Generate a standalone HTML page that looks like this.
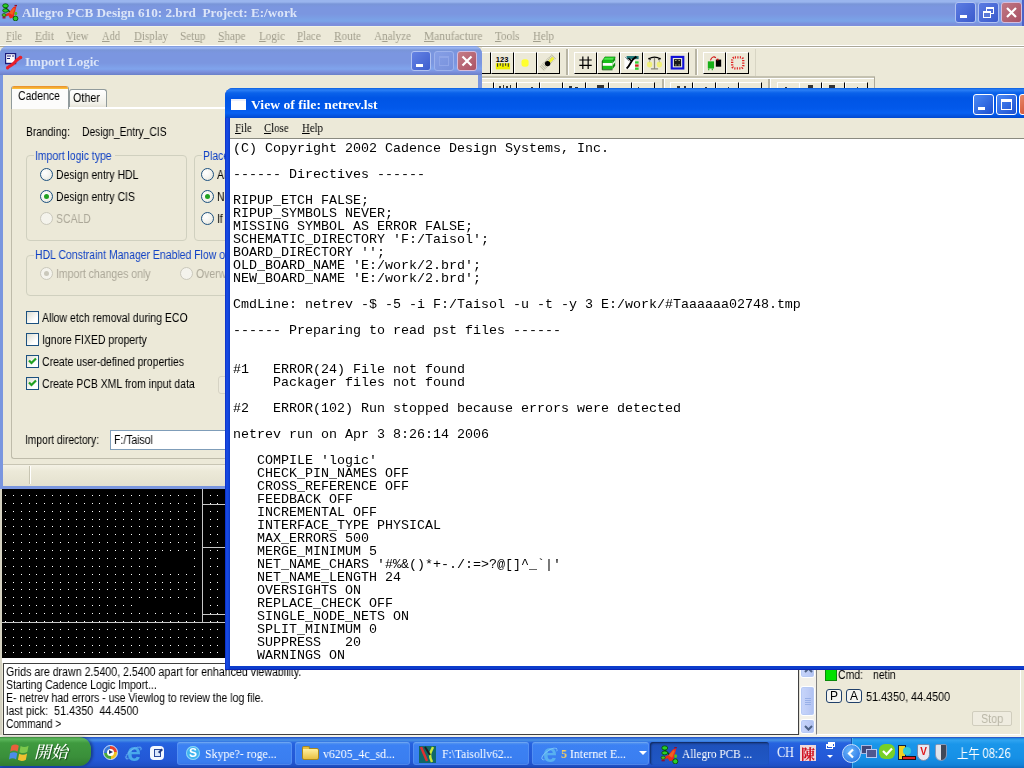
<!DOCTYPE html>
<html lang="zh-Hant">
<head>
<meta charset="utf-8">
<title>Allegro PCB Design 610: 2.brd</title>
<style>
*{box-sizing:border-box;margin:0;padding:0}
html,body{width:1024px;height:768px;overflow:hidden;background:#ece9d8}
body{position:relative;font-family:"Liberation Sans","Noto Sans CJK TC",sans-serif;font-size:12px;color:#000}
.abs{position:absolute}
.serif{font-family:"Liberation Serif","Noto Serif CJK SC",serif}
u{text-decoration:underline}
.lbl,.cap,#con div,#mmenu span,#vw .menu span,.tbtn span,.kb,#task>div{will-change:transform}

/* ---------- main window ---------- */
#mtitle{left:0;top:0;width:1024px;height:26px;background:linear-gradient(#9ab5ee 0,#9ab5ee 2px,#7995d8 4px,#7b96e0 7px,#7b96e0 14px,#7aa4e8 21px,#7b8fdc 24px,#7b8fdc 26px)}
#mtitle .cap{left:22px;top:5px;transform:scaleX(1.015);transform-origin:0 0;font:bold 13px/16px "Liberation Serif",serif;color:#dbe5f8;white-space:pre}
#mmenu{left:0;top:26px;width:1024px;height:21px;background:#ece9d8;border-top:1px solid #f0f4e6;border-bottom:1px solid #aaa798;box-shadow:inset 0 -1px 0 #fff}
#mmenu span{position:absolute;top:2px;font:12px/15px "Liberation Serif",serif;color:#a29f8e;white-space:nowrap;transform-origin:0 0}
.wbtn{position:absolute;width:21px;height:21px;border-radius:3px;border:1px solid #dfe6f8}

/* ---------- toolbar ---------- */
.tb{position:absolute;top:52px;width:23px;height:22px;background:#ece9d8;border:1px solid;border-color:#fff #000 #000 #fff}

.tb2{position:absolute;top:82px;width:23px;height:10px;border:1px solid;border-color:#fff #000 transparent #fff}
/* ---------- import logic ---------- */
#imp{left:0;top:46px;width:482px;height:443px;background:#7a96df;border-radius:8px 8px 0 0}
#imp .ttl{left:0;top:0;width:482px;height:29px;border-radius:8px 8px 0 0;background:linear-gradient(#6c88d0 0,#9ab4f0 1px,#9ab4f0 2px,#7995d8 4px,#7b96e0 7px,#7b96e0 17px,#80a4ec 23px,#7b8fdc 26px,#6a80c8 29px)}
#imp .cap{left:25px;top:8px;font:bold 13px/16px "Liberation Serif",serif;color:#dbe5f8;white-space:pre}
#imp .body{left:3px;top:29px;width:475px;height:411px;background:#ece9d8}
.lbl{position:absolute;white-space:nowrap;font:12px/14px "Liberation Sans",sans-serif}
#imp .lbl{margin-left:-.6px}
.blue{color:#0f40c4}
.gray{color:#aca899}
.grp{position:absolute;border:1px solid #d0d0bf;border-radius:4px}
.radio{position:absolute;width:13px;height:13px;border-radius:50%;border:1px solid #1c5180;background:radial-gradient(circle at 35% 35%,#fff 0,#f3f3ee 50%,#dcdcd0 100%)}
.radio.on::after{content:"";position:absolute;left:3px;top:3px;width:5px;height:5px;border-radius:50%;background:#21a121}
.radio.dis{border-color:#cac8bb;background:#f4f3ec}
.radio.dis.on::after{background:#cac8bb}
.chk{position:absolute;width:13px;height:13px;border:1px solid #1c5180;background:linear-gradient(135deg,#dcdcd0,#fff 70%)}

/* ---------- view window ---------- */
#vw{left:225px;top:88px;width:810px;height:582px;box-shadow:inset 0 -1px 0 #0a24b6;background:linear-gradient(90deg,#0a2cc0 0,#1648e0 1.5px,#1648e0 3px,#0c3ccc 4.5px,#0c3ccc 100%);border-radius:8px 8px 0 0}
#vw .ttl{left:0;top:0;width:810px;height:30px;border-radius:8px 8px 0 0;background:linear-gradient(#0a5fe0 0,#2b7ff5 2px,#0a62ea 5px,#0055e5 10px,#0258ea 20px,#0660f2 25px,#0148cf 30px)}
#vw .cap{left:26px;top:9px;transform:scaleX(1.049);transform-origin:0 0;font:bold 13px/16px "Liberation Serif",serif;color:#fff;white-space:pre}
#vw .menu{left:4.5px;top:30px;width:806px;height:21px;background:#ece9d8;border-bottom:1px solid #8a8a80}
#vw .menu span{position:absolute;top:3px;font:12px/15px "Liberation Serif",serif;color:#000;transform:scaleX(.9);transform-origin:0 0}
#vw .txt{left:4.5px;top:51px;width:806px;height:526.5px;background:#fff}
#vw pre{position:absolute;left:3px;top:3px;will-change:transform;font:13.33px/13px "Liberation Mono",monospace;color:#000}

/* ---------- canvas ---------- */
#cv{left:2px;top:489px;width:225px;height:170px;background:#000}

/* ---------- console ---------- */
#con{left:3px;top:663px;width:796px;height:72px;background:#fff;border:1px solid #404040}
#con div{position:absolute;left:1.5px;white-space:nowrap;font:12px/13px "Liberation Sans",sans-serif}

.sbb{position:absolute;width:15px;border:1px solid #fff;border-radius:3px;background:linear-gradient(90deg,#c8d6fb,#bccbf6 60%,#aebff0);box-shadow:0 0 0 1px #b7caf5 inset}
.kb{position:absolute;width:16px;height:14px;border:1px solid #20406a;border-radius:3px;background:#f4f4f0;font:12px/12px "Liberation Sans",sans-serif;text-align:center}
/* ---------- taskbar ---------- */
#task{left:0;top:738px;width:1024px;height:30px;box-shadow:0 -1px 0 #2a5ccc;background:linear-gradient(#3168d5 0,#4993e6 2px,#2663e0 5px,#245edb 10px,#2358d6 22px,#1f4fc4 28px,#1941a5 30px)}
.tbtn{position:absolute;top:4px;height:23px;border-radius:3px;background:linear-gradient(#5c9cf0 0,#3c81f3 3px,#3a7ef0 20px,#336fe0 24px);box-shadow:inset 0 0 0 1px rgba(255,255,255,.12)}
.tbtn span{position:absolute;top:4px;font:13px/16px "Liberation Serif","Noto Serif CJK SC",serif;color:#fff;white-space:nowrap}
</style>
</head>
<body>
<div id="mtitle" class="abs">
  <svg class="abs" style="left:1px;top:3px" width="18" height="18" viewBox="0 0 18 18"><path d="M3 3.500 L8 8 L14 16" stroke="#0a4a0a" stroke-width="1.400" fill="none"/><path d="M1.500 12.500 L8 9.500 L12.500 4 L15.500 3 L14.500 7 L12.500 14.500 L9 15.500 L7.500 12.500 L2 14.500Z" fill="#f0281c"/><path d="M8 10 L12.500 5 L14 5.500 L11.500 12Z" fill="#f06020"/><ellipse cx="4.500" cy="2.800" rx="2.800" ry="2" fill="#28d028" stroke="#084808" stroke-width=".8"/><ellipse cx="4.500" cy="7.500" rx="2.800" ry="1.800" fill="#28d028" stroke="#084808" stroke-width=".8"/><ellipse cx="3" cy="12" rx="2" ry="1.500" fill="#50c020" stroke="#084808" stroke-width=".6"/><ellipse cx="14.500" cy="15.500" rx="2.400" ry="2.400" fill="#28d028" stroke="#084808" stroke-width=".8"/><ellipse cx="14.800" cy="10.500" rx="1.500" ry="1.800" fill="#50c020"/><path d="M1.500 14.800h3" stroke="#901030" stroke-width="1.300"/><path d="M13.500 2.500h2.500" stroke="#901030" stroke-width="1.200"/></svg>
  <div class="abs cap">Allegro PCB Design 610: 2.brd  Project: E:/work</div>
  <div class="wbtn" style="left:955px;top:2px;background:linear-gradient(135deg,#5c7ce2,#3a5acc);border-color:#b0c2f2"><i class="abs" style="left:4px;top:12px;width:7px;height:3px;background:#fff"></i></div>
  <div class="wbtn" style="left:978px;top:2px;background:linear-gradient(135deg,#5c7ce2,#3a5acc);border-color:#b0c2f2">
    <i class="abs" style="left:7px;top:4px;width:8px;height:7px;border:1px solid #fff;border-top-width:2px"></i>
    <i class="abs" style="left:4px;top:8px;width:8px;height:7px;border:1px solid #fff;border-top-width:2px;background:#5a79d8"></i>
  </div>
  <div class="wbtn" style="left:1001px;top:2px;background:linear-gradient(135deg,#c07884,#a85064);border-color:#d4bcdc">
    <svg class="abs" style="left:3px;top:3px" width="13" height="13" viewBox="0 0 13 13"><path d="M2 2 L11 11 M11 2 L2 11" stroke="#fff" stroke-width="2.2"/></svg>
  </div>
</div>
<div class="abs" style="left:1022px;top:0;width:2px;height:26px;background:#4a62c8"></div>
<div id="mmenu" class="abs serif">
  <span style="left:6px;transform:scaleX(0.857)"><u>F</u>ile</span>
  <span style="left:35px;transform:scaleX(0.95)"><u>E</u>dit</span>
  <span style="left:66px;transform:scaleX(0.89)"><u>V</u>iew</span>
  <span style="left:102px;transform:scaleX(0.871)"><u>A</u>dd</span>
  <span style="left:134px;transform:scaleX(0.91)"><u>D</u>isplay</span>
  <span style="left:180px;transform:scaleX(0.933)">Set<u>u</u>p</span>
  <span style="left:218px;transform:scaleX(0.938)"><u>S</u>hape</span>
  <span style="left:259px;transform:scaleX(0.929)"><u>L</u>ogic</span>
  <span style="left:297px;transform:scaleX(0.904)"><u>P</u>lace</span>
  <span style="left:334px;transform:scaleX(0.942)"><u>R</u>oute</span>
  <span style="left:374px;transform:scaleX(0.925)">A<u>n</u>alyze</span>
  <span style="left:424px;transform:scaleX(0.954)"><u>M</u>anufacture</span>
  <span style="left:495px;transform:scaleX(0.925)"><u>T</u>ools</span>
  <span style="left:533px;transform:scaleX(0.9)"><u>H</u>elp</span>
</div>
<div class="abs" style="left:482px;top:47px;width:542px;height:1px;background:#fff"></div>
<div class="abs" style="left:482px;top:76px;width:393px;height:2px;background:#c4c1b0"></div>
<div class="abs" style="left:482px;top:78px;width:392px;height:1px;background:#fff"></div>
<div class="abs" style="left:874px;top:77px;width:1px;height:12px;background:#aca899"></div>
<div class="tb" style="left:468px"></div>
<div class="tb" style="left:491px"><svg width="21" height="20" viewBox="-1.3 -0.4 23.6 22.5" style="position:absolute;left:0;top:0"><text x="3" y="10" font-family="Liberation Sans,sans-serif" font-weight="bold" font-size="8.500" fill="#000">123</text><rect x="3" y="11" width="16" height="7" fill="#f0f000"/><path d="M5 11v4M8 11v3M11 11v4M14 11v3M17 11v4" stroke="#333" stroke-width="1.2"/></svg></div>
<div class="tb" style="left:514px"><svg width="21" height="20" viewBox="-1.3 -0.4 23.6 22.5" style="position:absolute;left:0;top:0"><rect x="6" y="6.500" width="8" height="8.500" rx="3" fill="#ffff30"/></svg></div>
<div class="tb" style="left:537px"><svg width="21" height="20" viewBox="-1.3 -0.4 23.6 22.5" style="position:absolute;left:0;top:0"><path d="M3 17 L17 3" stroke="#b9b9a0" stroke-width="7" stroke-dasharray="1 1"/><path d="M10 11 L16 5" stroke="#f2f230" stroke-width="3"/><circle cx="9.500" cy="11.500" r="3" fill="#000"/></svg></div>
<div class="tb" style="left:574px"><svg width="21" height="20" viewBox="-1.3 -0.4 23.6 22.5" style="position:absolute;left:0;top:0"><path d="M7.500 3.500v14M13.500 3.500v14M3.500 7.500h14M3.500 13.500h14" stroke="#000" stroke-width="1.350"/></svg></div>
<div class="tb" style="left:597px"><svg width="21" height="20" viewBox="-1.3 -0.4 23.6 22.5" style="position:absolute;left:0;top:0"><path d="M3.500 8.500 L6.500 4 H18 L15 8.500Z" fill="#22d822" stroke="#0a7a0a" stroke-width=".7"/><path d="M6 6.200h10" stroke="#8cf08c" stroke-width=".8"/><rect x="3.500" y="8.500" width="11.500" height="2.500" fill="#18c018"/><rect x="3.500" y="11" width="11.500" height="3" fill="#fff"/><rect x="3.500" y="14" width="11.500" height="4" fill="#18c018"/><path d="M15 8.500 L18 4 V14 L15 18Z" fill="#0c900c"/><path d="M15 11 l3 -3.500 v2.500 l-3 4z" fill="#d8f0d8"/><path d="M3.500 8.500V18.500H15" stroke="#064806" stroke-width="1" fill="none"/></svg></div>
<div class="tb" style="left:620px"><svg width="21" height="20" viewBox="-1.3 -0.4 23.6 22.5" style="position:absolute;left:0;top:0"><rect x="2.500" y="4" width="12" height="14" fill="#fff"/><rect x="5" y="3" width="13.500" height="3.500" fill="#207878"/><path d="M3 4 L8 9" stroke="#888" stroke-width="1"/><path d="M5 17 C9 14 9 10 12 7 L16 3.500" stroke="#000" stroke-width="2.200" fill="none"/><path d="M7 5.500 L10.500 8.500" stroke="#000" stroke-width="1.800"/><rect x="14.500" y="9" width="4" height="2.500" fill="#30d030"/><rect x="14.500" y="12.500" width="4" height="2.500" fill="#d02020"/><rect x="14.500" y="16" width="4" height="2.500" fill="#30d030"/></svg></div>
<div class="tb" style="left:643px"><svg width="21" height="20" viewBox="-1.3 -0.4 23.6 22.5" style="position:absolute;left:0;top:0"><path d="M10.500 5v12M6.500 17.500h8" stroke="#8a8878" stroke-width="1.400" fill="none"/><path d="M3.500 6.500 Q10.500 2 17.500 6.500" stroke="#000" stroke-width="1.300" fill="none"/><path d="M4 5l2 2.500M17 5l-2 2.500" stroke="#000" stroke-width="1.200"/><ellipse cx="5" cy="12.500" rx="3" ry="3.300" fill="#f0f078"/><ellipse cx="16" cy="12.500" rx="3" ry="3.300" fill="#f0f078"/><path d="M5 7v3M16 7v3" stroke="#a8a890" stroke-width=".8"/></svg></div>
<div class="tb" style="left:666px"><svg width="21" height="20" viewBox="-1.3 -0.4 23.6 22.5" style="position:absolute;left:0;top:0"><rect x="4" y="4" width="13" height="13" fill="#e8e8d8" stroke="#1010d8" stroke-width="2.400"/><rect x="6.500" y="6.500" width="8" height="8" fill="#1a1a1a"/><path d="M8 8h1.300M11.700 8h1.300M8 13h1.300M11.700 13h1.300" stroke="#d8d8b0" stroke-width="1.200"/></svg></div>
<div class="tb" style="left:703px"><svg width="21" height="20" viewBox="-1.3 -0.4 23.6 22.5" style="position:absolute;left:0;top:0"><rect x="3" y="9" width="7" height="8" fill="#18b018"/><rect x="12" y="7" width="6" height="8" fill="#000"/><rect x="13" y="6" width="2" height="2" fill="#d01010"/><path d="M6 8 C7 4 10 3 12 5" stroke="#d01010" stroke-width="1.200" fill="none"/><path d="M4 17v2M8 17v2" stroke="#18b018" stroke-width="1.200"/></svg></div>
<div class="tb" style="left:726px"><svg width="21" height="20" viewBox="-1.3 -0.4 23.6 22.5" style="position:absolute;left:0;top:0"><rect x="4.500" y="4.500" width="12.500" height="12.500" rx="3" fill="none" stroke="#e02020" stroke-width="2.600" stroke-dasharray="1.300 1.500"/></svg></div>
<div class="abs" style="left:566px;top:49px;width:2px;height:26px;border-left:2px solid #b8b5a4;border-right:1px solid #fff"></div>
<div class="abs" style="left:695px;top:49px;width:2px;height:26px;border-left:2px solid #b8b5a4;border-right:1px solid #fff"></div>
<div class="abs" style="left:755px;top:49px;width:1px;height:27px;background:#d8d5c4"></div>
<div class="tb2" style="left:471px"></div>
<div class="tb2" style="left:494px"></div>
<div class="tb2" style="left:517px"></div>
<div class="tb2" style="left:540px"></div>
<div class="tb2" style="left:563px"></div>
<div class="tb2" style="left:586px"></div>
<div class="tb2" style="left:609px"></div>
<div class="tb2" style="left:632px"></div>
<div class="tb2" style="left:670px"></div>
<div class="tb2" style="left:693px"></div>
<div class="tb2" style="left:716px"></div>
<div class="tb2" style="left:739px"></div>
<div class="tb2" style="left:777px"></div>
<div class="tb2" style="left:799px"></div>
<div class="tb2" style="left:822px"></div>
<div class="tb2" style="left:845px"></div>
<div class="abs" style="left:662px;top:79px;width:2px;height:10px;border-left:2px solid #b8b5a4;border-right:1px solid #fff"></div>
<div class="abs" style="left:768px;top:79px;width:2px;height:10px;border-left:2px solid #b8b5a4;border-right:1px solid #fff"></div>
<div id="cv" class="abs"><svg width="226" height="169" viewBox="0 0 226 169" shape-rendering="crispEdges" style="position:absolute;left:0;top:0">
<path d="M3 6.5h1M11 6.5h1M19 6.5h1M27 6.5h1M34 6.5h1M42 6.5h1M50 6.5h1M58 6.5h1M66 6.5h1M74 6.5h1M82 6.5h1M90 6.5h1M97 6.5h1M105 6.5h1M113 6.5h1M121 6.5h1M129 6.5h1M137 6.5h1M145 6.5h1M153 6.5h1M160 6.5h1M168 6.5h1M176 6.5h1M184 6.5h1M192 6.5h1M200 6.5h1M208 6.5h1M215 6.5h1M223 6.5h1M3 14.5h1M11 14.5h1M19 14.5h1M27 14.5h1M34 14.5h1M42 14.5h1M50 14.5h1M58 14.5h1M66 14.5h1M74 14.5h1M82 14.5h1M90 14.5h1M97 14.5h1M105 14.5h1M113 14.5h1M121 14.5h1M129 14.5h1M137 14.5h1M145 14.5h1M153 14.5h1M160 14.5h1M168 14.5h1M176 14.5h1M184 14.5h1M192 14.5h1M200 14.5h1M208 14.5h1M215 14.5h1M223 14.5h1M3 22.5h1M11 22.5h1M19 22.5h1M27 22.5h1M34 22.5h1M42 22.5h1M50 22.5h1M58 22.5h1M66 22.5h1M74 22.5h1M82 22.5h1M90 22.5h1M97 22.5h1M105 22.5h1M113 22.5h1M121 22.5h1M129 22.5h1M137 22.5h1M145 22.5h1M153 22.5h1M160 22.5h1M168 22.5h1M176 22.5h1M184 22.5h1M192 22.5h1M200 22.5h1M208 22.5h1M215 22.5h1M223 22.5h1M3 30.5h1M11 30.5h1M19 30.5h1M27 30.5h1M34 30.5h1M42 30.5h1M50 30.5h1M58 30.5h1M66 30.5h1M74 30.5h1M82 30.5h1M90 30.5h1M97 30.5h1M105 30.5h1M113 30.5h1M121 30.5h1M129 30.5h1M137 30.5h1M145 30.5h1M153 30.5h1M160 30.5h1M168 30.5h1M176 30.5h1M184 30.5h1M192 30.5h1M200 30.5h1M208 30.5h1M215 30.5h1M223 30.5h1M3 37.5h1M11 37.5h1M19 37.5h1M27 37.5h1M34 37.5h1M42 37.5h1M50 37.5h1M58 37.5h1M66 37.5h1M74 37.5h1M82 37.5h1M90 37.5h1M97 37.5h1M105 37.5h1M113 37.5h1M121 37.5h1M129 37.5h1M137 37.5h1M145 37.5h1M153 37.5h1M160 37.5h1M168 37.5h1M176 37.5h1M184 37.5h1M192 37.5h1M200 37.5h1M208 37.5h1M215 37.5h1M223 37.5h1M3 45.5h1M11 45.5h1M19 45.5h1M27 45.5h1M34 45.5h1M42 45.5h1M50 45.5h1M58 45.5h1M66 45.5h1M74 45.5h1M82 45.5h1M90 45.5h1M97 45.5h1M105 45.5h1M113 45.5h1M121 45.5h1M129 45.5h1M137 45.5h1M145 45.5h1M153 45.5h1M160 45.5h1M168 45.5h1M176 45.5h1M184 45.5h1M192 45.5h1M200 45.5h1M208 45.5h1M215 45.5h1M223 45.5h1M3 53.5h1M11 53.5h1M19 53.5h1M27 53.5h1M34 53.5h1M42 53.5h1M50 53.5h1M58 53.5h1M66 53.5h1M74 53.5h1M82 53.5h1M90 53.5h1M97 53.5h1M105 53.5h1M113 53.5h1M121 53.5h1M129 53.5h1M137 53.5h1M145 53.5h1M153 53.5h1M160 53.5h1M168 53.5h1M176 53.5h1M184 53.5h1M192 53.5h1M200 53.5h1M208 53.5h1M215 53.5h1M223 53.5h1M3 61.5h1M11 61.5h1M19 61.5h1M27 61.5h1M34 61.5h1M42 61.5h1M50 61.5h1M58 61.5h1M66 61.5h1M74 61.5h1M82 61.5h1M90 61.5h1M97 61.5h1M105 61.5h1M113 61.5h1M121 61.5h1M129 61.5h1M137 61.5h1M145 61.5h1M153 61.5h1M160 61.5h1M168 61.5h1M176 61.5h1M184 61.5h1M192 61.5h1M200 61.5h1M208 61.5h1M215 61.5h1M223 61.5h1M3 69.5h1M11 69.5h1M19 69.5h1M27 69.5h1M34 69.5h1M42 69.5h1M50 69.5h1M58 69.5h1M66 69.5h1M74 69.5h1M82 69.5h1M90 69.5h1M97 69.5h1M105 69.5h1M113 69.5h1M121 69.5h1M129 69.5h1M137 69.5h1M145 69.5h1M153 69.5h1M192 69.5h1M200 69.5h1M208 69.5h1M215 69.5h1M223 69.5h1M3 77.5h1M11 77.5h1M19 77.5h1M27 77.5h1M34 77.5h1M42 77.5h1M50 77.5h1M58 77.5h1M66 77.5h1M74 77.5h1M82 77.5h1M90 77.5h1M97 77.5h1M105 77.5h1M113 77.5h1M121 77.5h1M129 77.5h1M137 77.5h1M145 77.5h1M153 77.5h1M192 77.5h1M200 77.5h1M208 77.5h1M215 77.5h1M223 77.5h1M3 85.5h1M11 85.5h1M19 85.5h1M27 85.5h1M34 85.5h1M42 85.5h1M50 85.5h1M58 85.5h1M66 85.5h1M74 85.5h1M82 85.5h1M90 85.5h1M97 85.5h1M105 85.5h1M113 85.5h1M121 85.5h1M129 85.5h1M137 85.5h1M145 85.5h1M153 85.5h1M160 85.5h1M168 85.5h1M176 85.5h1M184 85.5h1M192 85.5h1M200 85.5h1M208 85.5h1M215 85.5h1M223 85.5h1M3 93.5h1M11 93.5h1M19 93.5h1M27 93.5h1M34 93.5h1M42 93.5h1M50 93.5h1M58 93.5h1M66 93.5h1M74 93.5h1M82 93.5h1M90 93.5h1M97 93.5h1M105 93.5h1M113 93.5h1M121 93.5h1M129 93.5h1M137 93.5h1M145 93.5h1M153 93.5h1M160 93.5h1M168 93.5h1M176 93.5h1M184 93.5h1M192 93.5h1M200 93.5h1M208 93.5h1M215 93.5h1M223 93.5h1M3 100.5h1M11 100.5h1M19 100.5h1M27 100.5h1M34 100.5h1M42 100.5h1M50 100.5h1M58 100.5h1M66 100.5h1M74 100.5h1M82 100.5h1M90 100.5h1M97 100.5h1M105 100.5h1M113 100.5h1M121 100.5h1M129 100.5h1M137 100.5h1M145 100.5h1M153 100.5h1M160 100.5h1M168 100.5h1M176 100.5h1M184 100.5h1M192 100.5h1M200 100.5h1M208 100.5h1M215 100.5h1M223 100.5h1M3 108.5h1M11 108.5h1M19 108.5h1M27 108.5h1M34 108.5h1M42 108.5h1M50 108.5h1M58 108.5h1M66 108.5h1M74 108.5h1M82 108.5h1M90 108.5h1M97 108.5h1M105 108.5h1M113 108.5h1M121 108.5h1M129 108.5h1M137 108.5h1M145 108.5h1M153 108.5h1M160 108.5h1M168 108.5h1M176 108.5h1M184 108.5h1M192 108.5h1M200 108.5h1M208 108.5h1M215 108.5h1M223 108.5h1M3 116.5h1M11 116.5h1M19 116.5h1M27 116.5h1M34 116.5h1M42 116.5h1M50 116.5h1M58 116.5h1M66 116.5h1M74 116.5h1M82 116.5h1M90 116.5h1M97 116.5h1M105 116.5h1M113 116.5h1M121 116.5h1M129 116.5h1M200 116.5h1M208 116.5h1M215 116.5h1M223 116.5h1M3 124.5h1M11 124.5h1M19 124.5h1M27 124.5h1M34 124.5h1M42 124.5h1M50 124.5h1M58 124.5h1M66 124.5h1M74 124.5h1M82 124.5h1M90 124.5h1M97 124.5h1M105 124.5h1M113 124.5h1M121 124.5h1M129 124.5h1M137 124.5h1M145 124.5h1M153 124.5h1M160 124.5h1M168 124.5h1M176 124.5h1M184 124.5h1M192 124.5h1M200 124.5h1M208 124.5h1M215 124.5h1M223 124.5h1M3 132.5h1M11 132.5h1M19 132.5h1M27 132.5h1M34 132.5h1M42 132.5h1M50 132.5h1M58 132.5h1M66 132.5h1M74 132.5h1M82 132.5h1M90 132.5h1M97 132.5h1M105 132.5h1M113 132.5h1M121 132.5h1M129 132.5h1M137 132.5h1M145 132.5h1M153 132.5h1M160 132.5h1M168 132.5h1M176 132.5h1M184 132.5h1M192 132.5h1M200 132.5h1M208 132.5h1M215 132.5h1M223 132.5h1M3 140.5h1M11 140.5h1M19 140.5h1M27 140.5h1M34 140.5h1M42 140.5h1M50 140.5h1M58 140.5h1M66 140.5h1M74 140.5h1M82 140.5h1M90 140.5h1M97 140.5h1M105 140.5h1M113 140.5h1M121 140.5h1M129 140.5h1M137 140.5h1M145 140.5h1M153 140.5h1M160 140.5h1M168 140.5h1M176 140.5h1M184 140.5h1M192 140.5h1M200 140.5h1M208 140.5h1M215 140.5h1M223 140.5h1M3 148.5h1M11 148.5h1M19 148.5h1M27 148.5h1M34 148.5h1M42 148.5h1M50 148.5h1M58 148.5h1M66 148.5h1M74 148.5h1M82 148.5h1M90 148.5h1M97 148.5h1M105 148.5h1M113 148.5h1M121 148.5h1M129 148.5h1M137 148.5h1M145 148.5h1M153 148.5h1M160 148.5h1M168 148.5h1M176 148.5h1M184 148.5h1M192 148.5h1M200 148.5h1M208 148.5h1M215 148.5h1M223 148.5h1M3 156.5h1M11 156.5h1M19 156.5h1M27 156.5h1M34 156.5h1M42 156.5h1M50 156.5h1M58 156.5h1M66 156.5h1M74 156.5h1M82 156.5h1M90 156.5h1M97 156.5h1M105 156.5h1M113 156.5h1M121 156.5h1M129 156.5h1M137 156.5h1M145 156.5h1M153 156.5h1M160 156.5h1M168 156.5h1M176 156.5h1M184 156.5h1M192 156.5h1M200 156.5h1M208 156.5h1M215 156.5h1M223 156.5h1M3 163.5h1M11 163.5h1M19 163.5h1M27 163.5h1M34 163.5h1M42 163.5h1M50 163.5h1M58 163.5h1M66 163.5h1M74 163.5h1M82 163.5h1M90 163.5h1M97 163.5h1M105 163.5h1M113 163.5h1M121 163.5h1M129 163.5h1M137 163.5h1M145 163.5h1M153 163.5h1M160 163.5h1M168 163.5h1M176 163.5h1M184 163.5h1M192 163.5h1M200 163.5h1M208 163.5h1M215 163.5h1M223 163.5h1" stroke="#fff" stroke-width="1" fill="none"/>
<path d="M200.5 0L200.5 133M201 15.5L226 15.5M201 58.5L226 58.5M201 125.5L226 125.5M0 133.5L226 133.5" stroke="#c8c8c8" stroke-width="1" fill="none"/>
</svg></div>
<div class="abs" style="left:0;top:489px;width:2px;height:249px;background:#d4d1c0"></div>
<div class="abs" style="left:2px;top:658px;width:816px;height:5px;background:#fff"></div>
<div id="con" class="abs">
<div style="top:2px;transform:scaleX(.886);transform-origin:0 0;white-space:pre">Grids are drawn 2.5400, 2.5400 apart for enhanced viewability.</div>
<div style="top:15px;transform:scaleX(.876);transform-origin:0 0;white-space:pre">Starting Cadence Logic Import...</div>
<div style="top:28px;transform:scaleX(.874);transform-origin:0 0;white-space:pre">E- netrev had errors - use Viewlog to review the log file.</div>
<div style="top:41px;transform:scaleX(.902);transform-origin:0 0;white-space:pre">last pick:  51.4350  44.4500</div>
<div style="top:54px;transform:scaleX(.84);transform-origin:0 0;white-space:pre">Command &gt;</div>
</div>
<div class="abs" style="left:799px;top:663px;width:17px;height:72px;background:#f3f1ea;border-left:1px solid #e2e0d6"></div>
<div class="sbb" style="left:800px;top:663px;height:15px;border-radius:0 0 3px 3px"><svg width="15" height="12" viewBox="0 0 15 12" style="position:absolute;left:0;top:0"><path d="M4 8 L7.500 4.500 L11 8" stroke="#4d6185" stroke-width="2" fill="none"/></svg></div>
<div class="sbb" style="left:800px;top:686px;height:30px"><i class="abs" style="left:4px;top:11px;width:6px;height:1px;background:#98b0e8;box-shadow:0 2px 0 #98b0e8,0 4px 0 #98b0e8,0 6px 0 #98b0e8"></i></div>
<div class="sbb" style="left:800px;top:719px;height:15px"><svg width="15" height="16" viewBox="0 0 15 16" style="position:absolute;left:0;top:0"><path d="M4 6 L7.500 9.500 L11 6" stroke="#4d6185" stroke-width="2" fill="none"/></svg></div>
<div class="abs" style="left:816px;top:663px;width:205px;height:72px;border:1px solid #808080;border-color:#808080 #fff #fff #808080;background:#ece9d8"></div>
<div class="abs" style="left:825px;top:669px;width:12px;height:12px;background:#00e000;border:1px solid #0a8a0a"></div>
<div class="lbl" style="left:838px;top:668px;transform:scaleX(.87);transform-origin:0 0">Cmd:</div>
<div class="lbl" style="left:873px;top:668px;transform:scaleX(.87);transform-origin:0 0">netin</div>
<div class="kb" style="left:826px;top:689px">P</div><div class="kb" style="left:846px;top:689px">A</div>
<div class="lbl" style="left:866px;top:690px;transform:scaleX(.9);transform-origin:0 0">51.4350, 44.4500</div>
<div class="abs" style="left:972px;top:711px;width:40px;height:15px;border:1px solid #d0cdbd;border-radius:2px;background:#efece0"></div>
<div class="lbl gray" style="left:981px;top:712px;transform:scaleX(.9);transform-origin:0 0;color:#b9b6a6">Stop</div>
<div class="abs" style="left:0;top:735px;width:1024px;height:2px;background:#f4f2e8"></div>
<i class="abs" style="left:499px;top:86px;width:2px;height:2px;background:#333"></i><i class="abs" style="left:503px;top:85px;width:1px;height:3px;background:#333"></i><i class="abs" style="left:506px;top:86px;width:2px;height:2px;background:#333"></i><i class="abs" style="left:510px;top:85px;width:1px;height:3px;background:#333"></i><i class="abs" style="left:531px;top:87px;width:2px;height:1px;background:#333"></i><i class="abs" style="left:569px;top:86px;width:3px;height:2px;background:#333"></i><i class="abs" style="left:575px;top:87px;width:3px;height:1px;background:#333"></i><i class="abs" style="left:597px;top:85px;width:7px;height:3px;background:#333"></i><i class="abs" style="left:638px;top:87px;width:1px;height:1px;background:#333"></i><i class="abs" style="left:677px;top:86px;width:3px;height:2px;background:#333"></i><i class="abs" style="left:684px;top:86px;width:2px;height:2px;background:#333"></i><i class="abs" style="left:705px;top:87px;width:2px;height:1px;background:#333"></i><i class="abs" style="left:728px;top:87px;width:1px;height:1px;background:#333"></i><i class="abs" style="left:785px;top:87px;width:2px;height:1px;background:#333"></i><i class="abs" style="left:808px;top:85px;width:5px;height:3px;background:#333"></i><i class="abs" style="left:829px;top:85px;width:6px;height:3px;background:#333"></i><i class="abs" style="left:857px;top:87px;width:1px;height:1px;background:#333"></i>
<!--IMPORT-START-->
<div id="imp" class="abs">
<div class="abs ttl"></div>
<svg class="abs" style="left:5px;top:7px" width="18" height="17" viewBox="0 0 18 17">
<rect x=".5" y=".5" width="10" height="10" fill="#fff" stroke="#1a1a7a" stroke-width="1.400"/><path d="M2 3h4M2 5.500h3M7 3h2" stroke="#1a1a7a" stroke-width="1"/>
<path d="M2 15 L8 11 L12 7 L16 4" stroke="#e8202a" stroke-width="3" fill="none"/><circle cx="2.500" cy="15" r="1.500" fill="#e8202a"/><circle cx="15.500" cy="4.500" r="1.800" fill="#e8202a"/></svg>
<div class="abs cap">Import Logic</div>
<div class="wbtn" style="left:411px;top:5px;width:20px;height:20px;background:linear-gradient(135deg,#6482e4,#3e5ece);border-color:#b0c2f2"><i class="abs" style="left:4px;top:12px;width:7px;height:3px;background:#fff"></i></div>
<div class="wbtn" style="left:434px;top:5px;width:20px;height:20px;background:linear-gradient(135deg,#869fe6,#7891dc);border-color:#9db2ec"><i class="abs" style="left:4px;top:4px;width:10px;height:10px;border:1px solid #90a6e8;border-top-width:2px"></i></div>
<div class="wbtn" style="left:457px;top:5px;width:20px;height:20px;background:linear-gradient(135deg,#c47c86,#ac5466);border-color:#d4bcdc"><svg class="abs" style="left:3px;top:3px" width="12" height="12" viewBox="0 0 12 12"><path d="M1.500 1.500 L10.500 10.500 M10.500 1.500 L1.500 10.500" stroke="#fff" stroke-width="2.200"/></svg></div>
<div class="abs body">
<div class="abs" style="left:8px;top:32px;width:470px;height:352px;border:1px solid #bebbaa;border-right:0;border-top:2px solid #fff;border-radius:0 0 0 3px"></div>
<div class="abs" style="left:66px;top:14px;width:38px;height:18px;border:1px solid #919b9c;border-bottom:0;border-radius:3px 3px 0 0;background:linear-gradient(#fff,#f1f0e8 80%,#e6e4d8)"></div>
<div class="abs" style="left:8px;top:11px;width:58px;height:23px;border:1px solid #919b9c;border-bottom:0;border-top:0;border-radius:3px 3px 0 0;background:#fcfcfb;overflow:hidden"><i class="abs" style="left:0;top:0;width:58px;height:3px;background:linear-gradient(#e68b2c,#ffc73c)"></i></div>
<div class="lbl" style="left:16px;top:14px;transform:scaleX(0.874);transform-origin:0 0">Cadence</div>
<div class="lbl" style="left:71px;top:16px;transform:scaleX(0.9);transform-origin:0 0">Other</div>
<div class="lbl" style="left:23.5px;top:50px;transform:scaleX(0.856);transform-origin:0 0">Branding:</div>
<div class="lbl" style="left:79.5px;top:50px;transform:scaleX(0.856);transform-origin:0 0">Design_Entry_CIS</div>
<div class="grp" style="left:23px;top:80px;width:161px;height:86px"></div>
<div class="grp" style="left:191px;top:80px;width:106px;height:86px"></div>
<div class="grp" style="left:23px;top:180px;width:374px;height:41px"></div>
<div class="abs" style="left:30.5px;top:75px;width:81px;height:12px;background:#ece9d8"></div>
<div class="lbl blue" style="left:32.5px;top:74px;transform:scaleX(0.87);transform-origin:0 0">Import logic type</div>
<div class="abs" style="left:198.5px;top:75px;width:124px;height:12px;background:#ece9d8"></div>
<div class="lbl blue" style="left:200.5px;top:74px;transform:scaleX(0.87);transform-origin:0 0">Place changed component</div>
<div class="abs" style="left:30.5px;top:174px;width:234px;height:12px;background:#ece9d8"></div>
<div class="lbl blue" style="left:32.5px;top:173px;transform:scaleX(0.87);transform-origin:0 0">HDL Constraint Manager Enabled Flow options</div>
<div class="radio" style="left:37.0px;top:93.0px"></div>
<div class="lbl" style="left:53.5px;top:93.0px;transform:scaleX(0.87);transform-origin:0 0">Design entry HDL</div>
<div class="radio on" style="left:37.0px;top:115.0px"></div>
<div class="lbl" style="left:53.5px;top:115.0px;transform:scaleX(0.87);transform-origin:0 0">Design entry CIS</div>
<div class="radio dis" style="left:37.0px;top:137.0px"></div>
<div class="lbl gray" style="left:53.5px;top:137.0px;transform:scaleX(0.87);transform-origin:0 0">SCALD</div>
<div class="radio" style="left:198.0px;top:93.0px"></div>
<div class="lbl" style="left:214.5px;top:93.0px;transform:scaleX(0.87);transform-origin:0 0">Always</div>
<div class="radio on" style="left:198.0px;top:115.0px"></div>
<div class="lbl" style="left:214.5px;top:115.0px;transform:scaleX(0.87);transform-origin:0 0">Never</div>
<div class="radio" style="left:198.0px;top:137.0px"></div>
<div class="lbl" style="left:214.5px;top:137.0px;transform:scaleX(0.87);transform-origin:0 0">If same</div>
<div class="radio on dis" style="left:37.0px;top:192.0px"></div>
<div class="lbl gray" style="left:53.5px;top:192px;transform:scaleX(0.875);transform-origin:0 0">Import changes only</div>
<div class="radio dis" style="left:177.0px;top:192.0px"></div>
<div class="lbl gray" style="left:193.5px;top:192px;transform:scaleX(0.875);transform-origin:0 0">Overwrite current constraints</div>
<div class="chk" style="left:23px;top:236px"></div>
<div class="lbl" style="left:39.5px;top:236px;transform:scaleX(0.873);transform-origin:0 0">Allow etch removal during ECO</div>
<div class="chk" style="left:23px;top:258px"></div>
<div class="lbl" style="left:39.5px;top:258px;transform:scaleX(0.873);transform-origin:0 0">Ignore FIXED property</div>
<div class="chk" style="left:23px;top:280px"><svg width="11" height="11" viewBox="0 0 11 11" style="position:absolute;left:0;top:0"><path d="M2 4.500 L4.500 7 L9 2.500" stroke="#21a121" stroke-width="2.200" fill="none"/></svg></div>
<div class="lbl" style="left:39.5px;top:280px;transform:scaleX(0.873);transform-origin:0 0">Create user-defined properties</div>
<div class="chk" style="left:23px;top:302px"><svg width="11" height="11" viewBox="0 0 11 11" style="position:absolute;left:0;top:0"><path d="M2 4.500 L4.500 7 L9 2.500" stroke="#21a121" stroke-width="2.200" fill="none"/></svg></div>
<div class="lbl" style="left:39.5px;top:302px;transform:scaleX(0.873);transform-origin:0 0">Create PCB XML from input data</div>
<div class="abs" style="left:215px;top:301px;width:70px;height:18px;border:1px solid #d6d3c4;border-radius:3px;background:#eeebdd"></div>
<div class="lbl" style="left:23px;top:358px;transform:scaleX(0.855);transform-origin:0 0">Import directory:</div>
<div class="abs" style="left:107px;top:355px;width:300px;height:20px;background:#fff;border:1px solid #7f9db9"></div>
<div class="lbl" style="left:111.5px;top:358px;transform:scaleX(0.87);transform-origin:0 0">F:/Taisol</div>
<div class="abs" style="left:0px;top:389px;width:475px;height:1px;background:#c8c5b4"></div>
<div class="abs" style="left:0px;top:390px;width:475px;height:21px;background:linear-gradient(#f4f2e6,#ece9d8 30%,#e4e1cf)"></div>
<div class="abs" style="left:26px;top:391px;width:2px;height:18px;border-left:1px solid #c8c5b2;border-right:1px solid #fff"></div>
</div></div>
<!--IMPORT-END-->
<div id="vw" class="abs">
<div class="abs ttl"></div>
<div class="abs" style="left:6px;top:11px;width:15px;height:11px;background:#fff;border-top:2px solid #e8eefc"></div>
<div class="abs cap">View of file: netrev.lst</div>
<div class="wbtn" style="left:748px;top:6px;background:linear-gradient(135deg,#4c8af5,#1c50d0);border-color:#fff"><i class="abs" style="left:4px;top:12px;width:7px;height:3px;background:#fff"></i></div>
<div class="wbtn" style="left:771px;top:6px;background:linear-gradient(135deg,#4c8af5,#1c50d0);border-color:#fff"><i class="abs" style="left:4px;top:4px;width:11px;height:11px;border:1px solid #fff;border-top-width:3px"></i></div>
<div class="wbtn" style="left:794px;top:6px;background:linear-gradient(135deg,#e88a6a,#c8391c);border-color:#fff"></div>
<div class="abs menu"><span style="left:5.5px"><u>F</u>ile</span><span style="left:34px"><u>C</u>lose</span><span style="left:72px"><u>H</u>elp</span></div>
<div class="abs txt"><pre>(C) Copyright 2002 Cadence Design Systems, Inc.

------ Directives ------

RIPUP_ETCH FALSE;
RIPUP_SYMBOLS NEVER;
MISSING SYMBOL AS ERROR FALSE;
SCHEMATIC_DIRECTORY 'F:/Taisol';
BOARD_DIRECTORY '';
OLD_BOARD_NAME 'E:/work/2.brd';
NEW_BOARD_NAME 'E:/work/2.brd';

CmdLine: netrev -$ -5 -i F:/Taisol -u -t -y 3 E:/work/#Taaaaaa02748.tmp

------ Preparing to read pst files ------


#1   ERROR(24) File not found
     Packager files not found

#2   ERROR(102) Run stopped because errors were detected

netrev run on Apr 3 8:26:14 2006

   COMPILE 'logic'
   CHECK_PIN_NAMES OFF
   CROSS_REFERENCE OFF
   FEEDBACK OFF
   INCREMENTAL OFF
   INTERFACE_TYPE PHYSICAL
   MAX_ERRORS 500
   MERGE_MINIMUM 5
   NET_NAME_CHARS '#%&amp;()*+-./:=&gt;?@[]^_`|'
   NET_NAME_LENGTH 24
   OVERSIGHTS ON
   REPLACE_CHECK OFF
   SINGLE_NODE_NETS ON
   SPLIT_MINIMUM 0
   SUPPRESS   20
   WARNINGS ON</pre></div>
</div>
<!--TASK-START-->
<div id="task" class="abs">
<div class="abs" style="left:0;top:-1px;width:91px;height:29px;border-radius:0 12px 12px 0;background:linear-gradient(#3d8b3d 0,#5cb85c 2px,#3f9a3f 6px,#3a8f3a 20px,#2f7a2f 30px);box-shadow:2px 0 3px rgba(0,0,0,.35)"></div>
<svg class="abs" style="left:9px;top:4px" width="22" height="22" viewBox="0 0 18 18"><path d="M2 3 Q5 1 8 3 L7 8 Q4 6 1 8Z" fill="#e8603c"/><path d="M9.500 3.300 Q12.500 5 16 3 L15 8 Q12 10 8.500 8.300Z" fill="#7cc84c"/><path d="M.8 9.300 Q4 7.300 6.800 9.300 L5.800 14.300 Q3 12.300 0 14.300Z" fill="#4c8ce8"/><path d="M8.300 9.600 Q11.500 11.500 14.800 9.500 L13.800 14.500 Q10.500 16.500 7.300 14.600Z" fill="#f0c030"/></svg>
<div class="abs" style="left:34px;top:3px;font:italic 500 17px/24px 'Liberation Serif','Noto Serif CJK SC',serif;color:#fff;text-shadow:1px 1px 1px rgba(0,0,0,.45);white-space:nowrap">開始</div>
<div class="abs" style="left:103px;top:7px;width:15px;height:15px;border-radius:50%;background:conic-gradient(#e8402c 0 25%,#f0c020 0 50%,#48a838 0 75%,#3878d8 0);border:1px solid #d8e4f8"><i class="abs" style="left:3px;top:3px;width:7px;height:7px;border-radius:50%;background:#fff"></i><i class="abs" style="left:5px;top:4px;border:2.5px solid transparent;border-left:4px solid #203060"></i></div>
<div class="abs" style="left:127px;top:-1px;font:bold 25px/30px 'Liberation Sans',sans-serif;color:#48a8ec;text-shadow:0 0 1px #1c5cc8">e</div><i class="abs" style="left:124px;top:11px;width:19px;height:8px;border:1.5px solid #6cbcf4;border-bottom-color:transparent;border-radius:50%;transform:rotate(-35deg)"></i>
<div class="abs" style="left:150px;top:8px;width:14px;height:14px;border-radius:4px;background:#f4f8ff"><i class="abs" style="left:4px;top:3px;width:7px;height:8px;border:1.5px solid #28489c;background:#dce8fc"></i><i class="abs" style="left:8px;top:4px;width:5px;height:2px;background:#203880;transform:rotate(-45deg)"></i></div>
<div class="tbtn" style="left:177px;width:115px;"><i class="abs" style="left:9px;top:4px;width:14px;height:14px;border-radius:50%;background:#40b4f0;box-shadow:0 0 0 1px #90d4f8 inset"></i><b class="abs" style="left:12px;top:3px;font:bold 12px/16px 'Liberation Sans',sans-serif;color:#fff">S</b><span style="left:27.5px;transform:scaleX(0.91);transform-origin:0 0">Skype?- roge...</span></div>
<div class="tbtn" style="left:295px;width:115px;"><i class="abs" style="left:7px;top:6px;width:17px;height:12px;border-radius:1px 2px 2px 2px;background:linear-gradient(#fff0a0,#e8c040);border:1px solid #a88820"></i><i class="abs" style="left:7px;top:4px;width:8px;height:3px;background:#e8c040;border:1px solid #a88820;border-bottom:0;border-radius:2px 2px 0 0"></i><span style="left:27.5px;transform:scaleX(0.91);transform-origin:0 0">v6205_4c_sd...</span></div>
<div class="tbtn" style="left:413px;width:116px;"><svg class="abs" style="left:6px;top:4px" width="17" height="17" viewBox="0 0 17 17"><rect width="17" height="17" fill="#106868"/><path d="M2 1 L8 15" stroke="#e03030" stroke-width="2.500"/><path d="M14 1 C12 6 9 8 13 16" stroke="#c8e838" stroke-width="2.500" fill="none"/><path d="M6 1 L11 9" stroke="#202020" stroke-width="2"/></svg><span style="left:28.5px;transform:scaleX(0.89);transform-origin:0 0">F:\Taisollv62...</span></div>
<div class="tbtn" style="left:532px;width:117px;"><b class="abs" style="left:11px;top:-4px;font:bold 25px/30px 'Liberation Sans',sans-serif;color:#58b0f0">e</b><i class="abs" style="left:8px;top:8px;width:19px;height:8px;border:1.5px solid #7cc4f8;border-bottom-color:transparent;border-radius:50%;transform:rotate(-35deg)"></i><span style="left:28.5px;transform:scaleX(0.915);transform-origin:0 0"><b style="color:#f8d060;font-weight:bold">5</b> Internet E...</span></div>
<i class="abs" style="left:639px;top:13px;border:4px solid transparent;border-top:4px solid #fff;border-bottom:0"></i>
<div class="tbtn" style="left:650px;width:119px;background:linear-gradient(#1c4aa8 0,#1e52bc 4px,#2058c6 24px);box-shadow:inset 1px 1px 2px rgba(0,0,0,.5)"><svg class="abs" style="left:10px;top:3px" width="19" height="19" viewBox="0 0 18 18"><path d="M3 3.500 L8 8 L14 16" stroke="#0a4a0a" stroke-width="1.400" fill="none"/><path d="M1.500 12.500 L8 9.500 L12.500 4 L15.500 3 L14.500 7 L12.500 14.500 L9 15.500 L7.500 12.500 L2 14.500Z" fill="#f0281c"/><path d="M8 10 L12.500 5 L14 5.500 L11.500 12Z" fill="#f06020"/><ellipse cx="4.500" cy="2.800" rx="2.800" ry="2" fill="#28d028" stroke="#084808" stroke-width=".8"/><ellipse cx="4.500" cy="7.500" rx="2.800" ry="1.800" fill="#28d028" stroke="#084808" stroke-width=".8"/><ellipse cx="3" cy="12" rx="2" ry="1.500" fill="#50c020" stroke="#084808" stroke-width=".6"/><ellipse cx="14.500" cy="15.500" rx="2.400" ry="2.400" fill="#28d028" stroke="#084808" stroke-width=".8"/><ellipse cx="14.800" cy="10.500" rx="1.500" ry="1.800" fill="#50c020"/><path d="M1.500 14.800h3" stroke="#901030" stroke-width="1.300"/><path d="M13.500 2.500h2.500" stroke="#901030" stroke-width="1.200"/></svg><span style="left:32px;transform:scaleX(0.87);transform-origin:0 0">Allegro PCB ...</span></div>
<div class="abs serif" style="left:777px;top:6px;font:14px/18px 'Liberation Serif',serif;color:#fff;transform:scaleX(.87);transform-origin:0 0">CH</div>
<div class="abs" style="left:800px;top:7px;width:16px;height:16px;background:#f0d8d8;font:bold 14px/16px 'Noto Serif CJK SC','Noto Sans CJK TC',serif;color:#d01020;text-align:center">陳</div>
<i class="abs" style="left:826px;top:6px;width:7px;height:5px;border:1px solid #fff;border-top-width:2px"></i><i class="abs" style="left:828px;top:4px;width:7px;height:5px;border:1px solid #fff;border-top-width:2px"></i>
<i class="abs" style="left:827px;top:17px;border:3px solid transparent;border-top:3px solid #fff;border-bottom:0"></i>
<div class="abs" style="left:851px;top:0;width:173px;height:30px;background:linear-gradient(#1a7fd8 0,#30a4f0 2px,#1a96ea 6px,#1690e6 20px,#1282d8 27px,#0e6cc0 30px);border-left:1px solid #1558b0;box-shadow:inset 1px 0 0 #48b0f4"></div>
<div class="abs" style="left:842px;top:6px;width:19px;height:19px;border-radius:50%;background:radial-gradient(circle at 40% 35%,#6cb8fc,#1c68e0);border:1px solid #c8e0fc"><svg width="17" height="17" viewBox="0 0 17 17" style="position:absolute;left:0;top:0"><path d="M10 4.500 L6 8.500 L10 12.500" stroke="#fff" stroke-width="2.200" fill="none"/></svg></div>
<div class="abs" style="left:861px;top:7px;width:11px;height:9px;background:#404878;border:1px solid #a8b8e0"></div><div class="abs" style="left:866px;top:11px;width:11px;height:9px;background:#505890;border:1px solid #b8c8f0"></div>
<div class="abs" style="left:879px;top:6px;width:16px;height:15px;border-radius:6px;background:#78d028"><svg width="17" height="15" viewBox="0 0 17 15" style="position:absolute;left:0;top:0"><path d="M4 7 L7.500 10.500 L13 4.500" stroke="#fff" stroke-width="2.200" fill="none"/></svg></div>
<div class="abs" style="left:898px;top:7px;width:8px;height:15px;background:#f0d020;border:1px solid #102040"></div><div class="abs" style="left:903px;top:9px;width:8px;height:8px;border-radius:50%;background:#30c8d8"></div><div class="abs" style="left:902px;top:18px;width:14px;height:4px;background:#e02020;border:1px solid #201010"></div>
<div class="abs" style="left:917px;top:6px;width:13px;height:17px;border-radius:2px 2px 7px 7px;background:#e8e8f0;border:1px solid #7888a8;font:bold 10px/14px 'Liberation Sans',sans-serif;color:#e01818;text-align:center">V</div>
<div class="abs" style="left:935px;top:6px;width:12px;height:17px;border-radius:2px 2px 7px 7px;background:linear-gradient(90deg,#e0e4ec 50%,#404858 50%);border:1px solid #8898b8"></div>
<div class="abs" style="left:957px;top:6px;font:13px/18px 'Noto Sans CJK TC','Liberation Sans',sans-serif;color:#fff;white-space:nowrap;transform:scaleX(.875);transform-origin:0 0">上午 08:26</div>
</div>
<!--TASK-END-->
</body>
</html>
